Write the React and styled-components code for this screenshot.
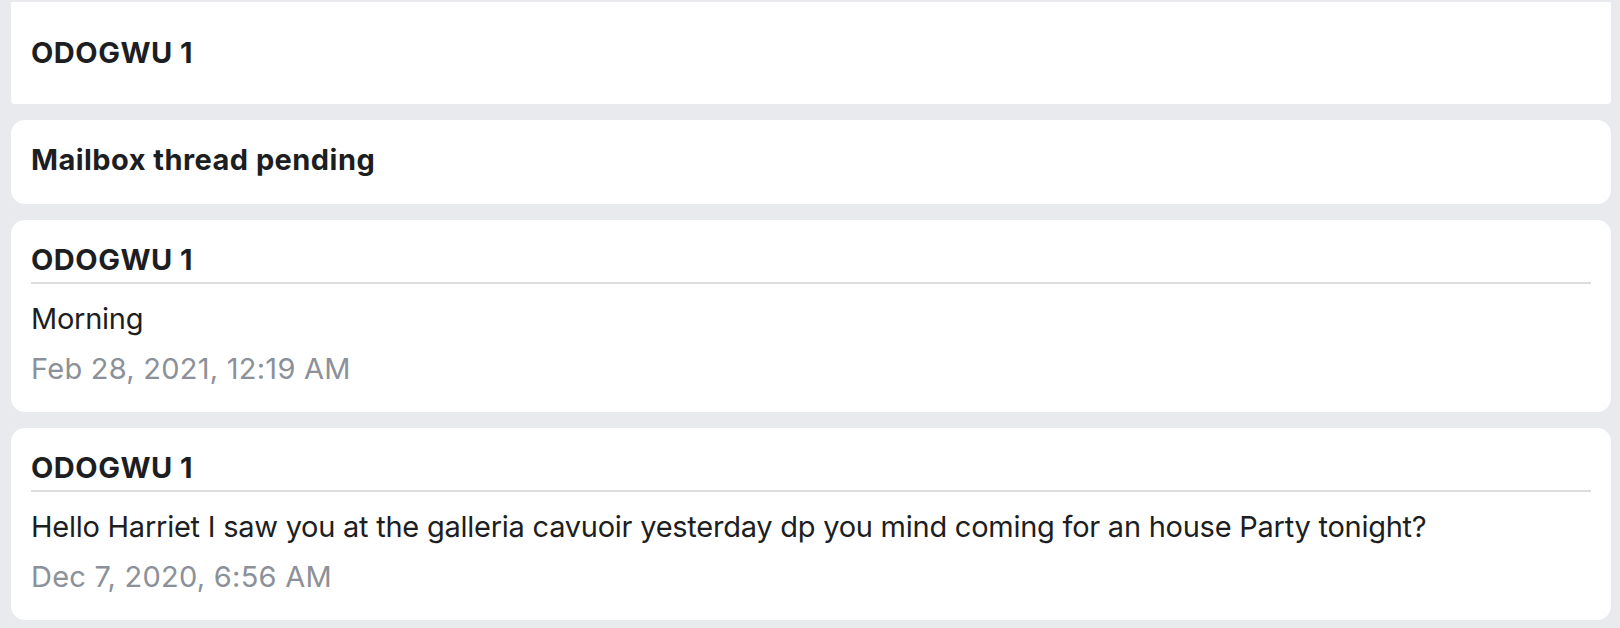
import React from 'react'
import styled, { createGlobalStyle } from 'styled-components'

const GlobalStyle = createGlobalStyle`
  html, body {
    margin: 0;
    padding: 0;
    background: #e9eaee;
  }
  body {
    font-family: Inter, "Noto Sans", "Liberation Sans", sans-serif;
    color: #1c1e22;
    -webkit-font-smoothing: antialiased;
  }
`

const messages = [
  {
    id: 1,
    sender: 'ODOGWU 1',
    body: 'Morning',
    date: 'Feb 28, 2021, 12:19 AM',
  },
  {
    id: 2,
    sender: 'ODOGWU 1',
    body: 'Hello Harriet I saw you at the galleria cavuoir yesterday dp you mind coming for an house Party tonight?',
    date: 'Dec 7, 2020, 6:56 AM',
  },
]

const App = () => {
  return (
    <>
      <GlobalStyle />
      <Page>
        <TitleBar>ODOGWU 1</TitleBar>
        <StatusCard>Mailbox thread pending</StatusCard>
        {messages.map((m) => (
          <MessageCard key={m.id}>
            <Sender>{m.sender}</Sender>
            <Body>{m.body}</Body>
            <Stamp>{m.date}</Stamp>
          </MessageCard>
        ))}
      </Page>
    </>
  )
}

export default App

const Page = styled.div`
  display: flex;
  flex-direction: column;
  gap: 16px;
  padding: 2px 9px 8px 11px;
  font-size: 29px;
`

const Card = styled.div`
  background: #ffffff;
  border-radius: 14px;
  padding: 0 20px;
`

const TitleBar = styled(Card)`
  border-radius: 0 0 4px 4px;
  padding-top: 29px;
  padding-bottom: 29px;
  line-height: 44px;
  font-weight: 700;
  letter-spacing: 0.5px;
`

const StatusCard = styled(Card)`
  padding-top: 18px;
  padding-bottom: 22px;
  line-height: 44px;
  font-weight: 700;
  letter-spacing: 0.45px;
`

const MessageCard = styled(Card)`
  padding-top: 20px;
  padding-bottom: 18px;
`

const Sender = styled.div`
  font-weight: 700;
  letter-spacing: 0.5px;
  line-height: 40px;
  padding-bottom: 2px;
  border-bottom: 2px solid #dcdce0;
`

const Body = styled.div`
  margin-top: 10px;
  line-height: 50px;
  letter-spacing: -0.25px;
  white-space: nowrap;
`

const Stamp = styled.div`
  line-height: 50px;
  letter-spacing: 0.25px;
  color: #8c9099;
`
